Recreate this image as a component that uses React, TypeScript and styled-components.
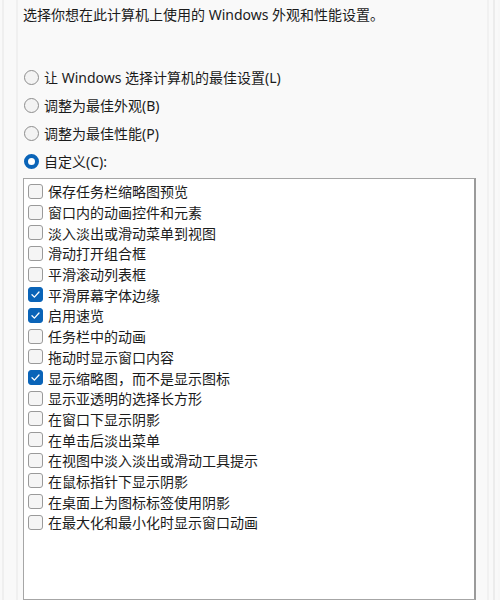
import styled, { createGlobalStyle } from 'styled-components';

const GlobalStyle = createGlobalStyle`
  html, body {
    margin: 0;
    padding: 0;
    background: #f9f9f9;
  }
  body {
    font-family: "Noto Sans", "Noto Sans CJK SC", sans-serif;
    color: #1b1b1b;
  }
`;

const Page = styled.div`
  width: 500px;
  height: 600px;
  overflow: hidden;
  display: flex;
  background: #f9f9f9;
`;

const Edge = styled.div<{ side: 'left' | 'right' }>`
  width: ${(p) => (p.side === 'left' ? '23px' : '24px')};
  flex-shrink: 0;
  display: flex;
  justify-content: ${(p) => (p.side === 'left' ? 'flex-start' : 'flex-end')};
`;

const EdgeLine = styled.div<{ offset: number; tone: string }>`
  width: 2px;
  height: 100%;
  margin-left: ${(p) => p.offset}px;
  background: ${(p) => p.tone};
`;

const Content = styled.div`
  flex: 1;
  display: flex;
  flex-direction: column;
`;

const Intro = styled.p`
  margin: 5px 0 0;
  font-size: 14px;
  line-height: 20px;
  white-space: nowrap;
`;

const RadioGroup = styled.div`
  margin-top: 38px;
  display: flex;
  flex-direction: column;
`;

const RadioRow = styled.label`
  height: 28px;
  display: flex;
  align-items: center;
  gap: 5px;
  font-size: 14px;
  margin-left: 1px;
`;

const RadioDot = styled.span<{ checked?: boolean }>`
  width: 15px;
  height: 15px;
  box-sizing: border-box;
  border-radius: 50%;
  flex-shrink: 0;
  border: ${(p) => (p.checked ? '4px solid #0a64b8' : '1px solid #8d8d8d')};
  background: ${(p) => (p.checked ? '#ffffff' : '#f3f3f3')};
`;

const ListBox = styled.div`
  margin-top: 3px;
  height: 440px;
  background: #ffffff;
  border: 1px solid #a6a6a6;
  border-right: 2px solid #9a9a9a;
  padding: 2px 4px 0;
  display: flex;
  flex-direction: column;
`;

const CheckRow = styled.label`
  height: 20.7px;
  display: flex;
  align-items: center;
  gap: 5px;
  font-size: 14px;
  white-space: nowrap;
`;

const CheckBox = styled.span<{ checked?: boolean }>`
  width: 15px;
  height: 15px;
  box-sizing: border-box;
  border-radius: 3px;
  flex-shrink: 0;
  display: flex;
  align-items: center;
  justify-content: center;
  border: 1px solid ${(p) => (p.checked ? '#0a64b8' : '#9a9a9a')};
  background: ${(p) => (p.checked ? '#0a64b8' : '#f5f5f5')};
`;

const CheckMark = () => (
  <svg width="11" height="11" viewBox="0 0 11 11" fill="none">
    <path d="M2 5.8 L4.4 8.1 L9 3" stroke="#ffffff" strokeWidth="1.3" strokeLinecap="round" strokeLinejoin="round" />
  </svg>
);

const radios = [
  { label: '让 Windows 选择计算机的最佳设置(L)', checked: false },
  { label: '调整为最佳外观(B)', checked: false },
  { label: '调整为最佳性能(P)', checked: false },
  { label: '自定义(C):', checked: true },
];

const options = [
  { label: '保存任务栏缩略图预览', checked: false },
  { label: '窗口内的动画控件和元素', checked: false },
  { label: '淡入淡出或滑动菜单到视图', checked: false },
  { label: '滑动打开组合框', checked: false },
  { label: '平滑滚动列表框', checked: false },
  { label: '平滑屏幕字体边缘', checked: true },
  { label: '启用速览', checked: true },
  { label: '任务栏中的动画', checked: false },
  { label: '拖动时显示窗口内容', checked: false },
  { label: '显示缩略图，而不是显示图标', checked: true },
  { label: '显示亚透明的选择长方形', checked: false },
  { label: '在窗口下显示阴影', checked: false },
  { label: '在单击后淡出菜单', checked: false },
  { label: '在视图中淡入淡出或滑动工具提示', checked: false },
  { label: '在鼠标指针下显示阴影', checked: false },
  { label: '在桌面上为图标标签使用阴影', checked: false },
  { label: '在最大化和最小化时显示窗口动画', checked: false },
];

export default function App() {
  return (
    <Page>
      <GlobalStyle />
      <Edge side="left">
        <EdgeLine offset={2} tone="#efefef" />
        <EdgeLine offset={12} tone="#f0f0f0" />
      </Edge>
      <Content>
        <Intro>选择你想在此计算机上使用的 Windows 外观和性能设置。</Intro>
        <RadioGroup>
          {radios.map((r) => (
            <RadioRow key={r.label}>
              <RadioDot checked={r.checked} />
              {r.label}
            </RadioRow>
          ))}
        </RadioGroup>
        <ListBox>
          {options.map((o) => (
            <CheckRow key={o.label}>
              <CheckBox checked={o.checked}>{o.checked && <CheckMark />}</CheckBox>
              {o.label}
            </CheckRow>
          ))}
        </ListBox>
      </Content>
      <Edge side="right">
        <EdgeLine offset={0} tone="#f1f1f1" />
        <EdgeLine offset={4} tone="#ececec" />
        <EdgeLine offset={3} tone="#f7f7f7" />
      </Edge>
    </Page>
  );
}
